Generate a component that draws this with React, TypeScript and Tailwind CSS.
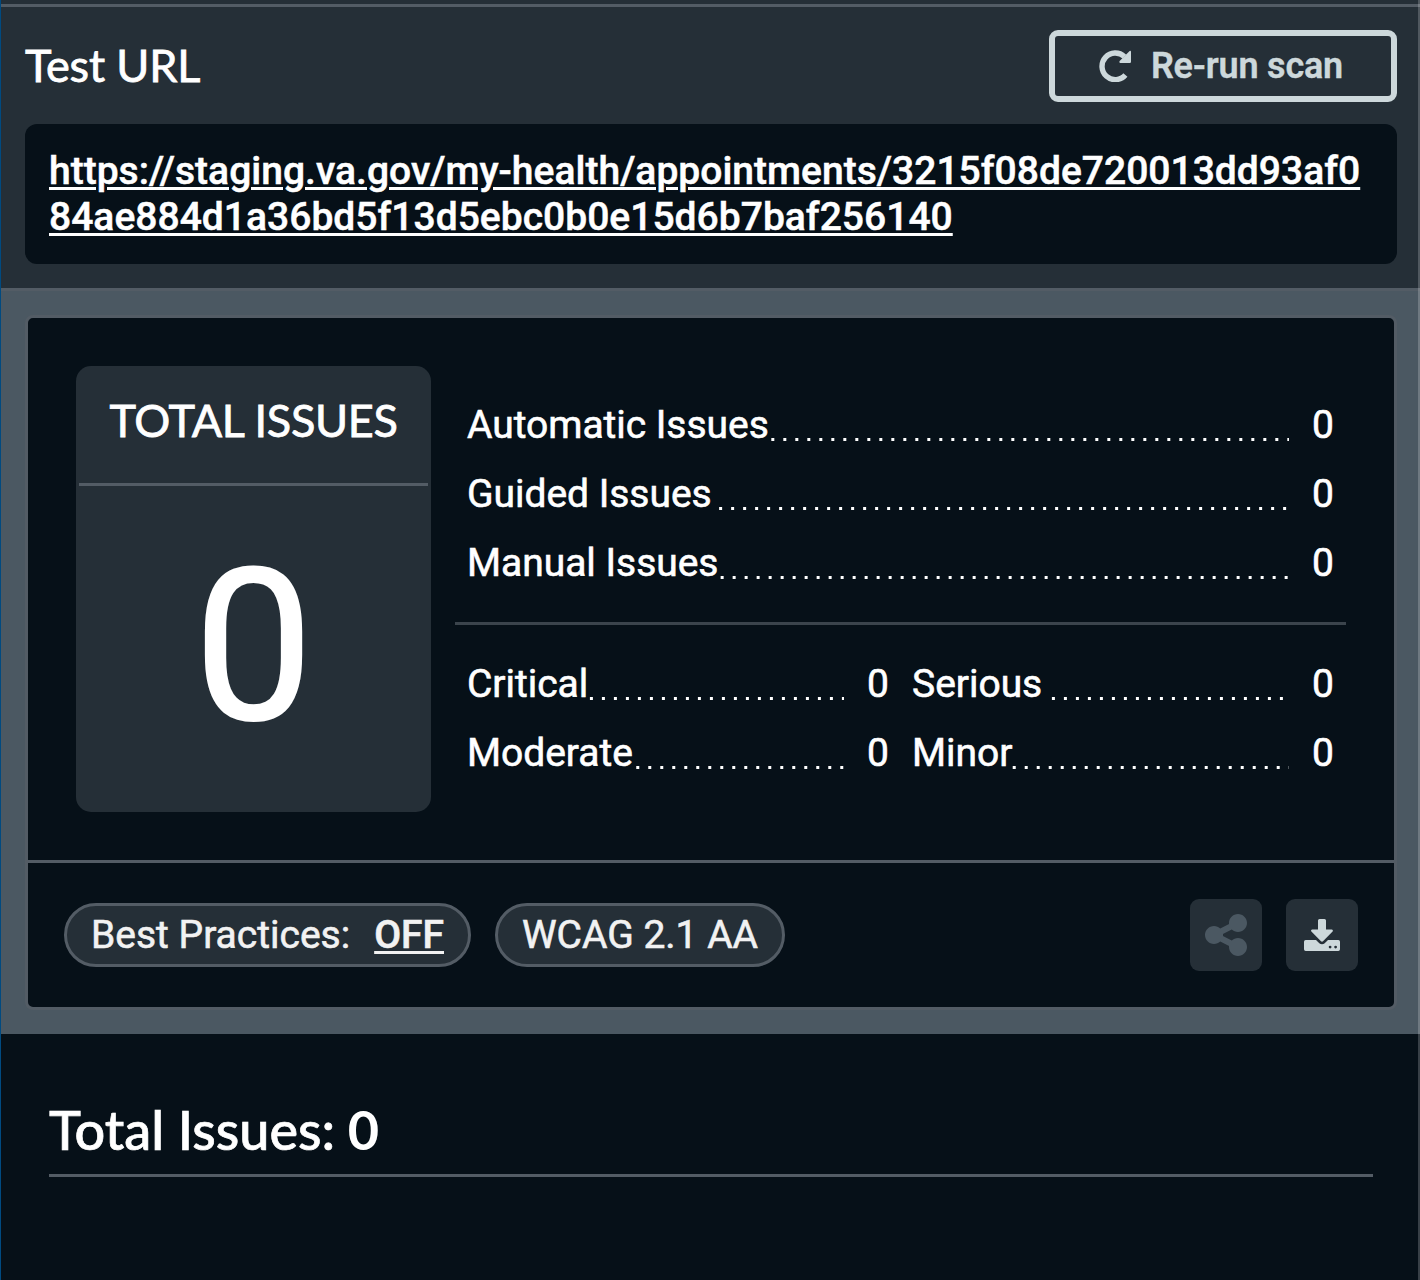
import { FaShareNodes } from "react-icons/fa6";

const glyph = "[-webkit-text-stroke:0.6px_currentColor]";

function Row({ label, dots }: { label: string; dots: string }) {
  return (
    <div className={"flex h-[69px] items-start text-[39px] leading-[71px] tracking-[-0.03px] " + glyph}>
      <span className="whitespace-nowrap">{label}</span>
      <span
        className={
          "mr-[23px] mt-[48px] h-[3px] min-w-0 flex-1 bg-[linear-gradient(to_right,white_3px,transparent_3px)] bg-[length:12px_3px] bg-repeat-x " +
          dots
        }
      />
      <span>0</span>
    </div>
  );
}

function RedoIcon() {
  return (
    <svg viewBox="0 0 32 32" className="size-8 shrink-0" fill="none">
      <path d="M26.400 25 A13.300 13.300 0 1 1 25.400 6.600" stroke="currentColor" strokeWidth="5.400" />
      <path d="M30.600 1.100 Q32 .3 32 2 V11.800 Q32 13 30.800 13 H21.200 Q19.600 12.400 20.600 11 Z" fill="currentColor" />
    </svg>
  );
}

function DownloadIcon() {
  return (
    <svg viewBox="0 0 36 32" className="h-8 w-9" fill="currentColor">
      <path d="M15.500 0h5A1.500 1.500 0 0 1 22 1.500V10.500h5.700c1.100 0 1.600 1.300.9 2.100L19 22.200c-.6.6-1.400.6-2 0L7.400 12.600c-.8-.8-.2-2.100.9-2.100H14V1.500A1.500 1.500 0 0 1 15.500 0Z" />
      <path fillRule="evenodd" d="M1.700 21H12l3.300 3.200c1.500 1.500 3.900 1.500 5.400 0L24 21h10.300A1.700 1.700 0 0 1 36 22.700v7.600a1.700 1.700 0 0 1-1.700 1.700H1.700A1.700 1.700 0 0 1 0 30.300v-7.600A1.700 1.700 0 0 1 1.700 21ZM26.100 26.700a1.400 1.400 0 1 0 0 2.800 1.400 1.400 0 0 0 0-2.800Zm5.500 0a1.400 1.400 0 1 0 0 2.800 1.400 1.400 0 0 0 0-2.800Z" />
    </svg>
  );
}

export default function App() {
  return (
    <div className="relative h-[1280px] w-[1420px] overflow-hidden border-l border-[#004a80] bg-[#061018] font-[Roboto,sans-serif] text-white">
      <header className="h-[291px] border-b-[3px] border-[#535c65] bg-[#252f37]">
        <div className="h-[7px] border-b-[3px] border-[#535c65]" />
        <div className="flex items-start justify-between pl-6 pr-[23px] pt-[23px]">
          <h2 className="font-[Lato,sans-serif] text-[45px] leading-[70px] tracking-[-0.15px] [-webkit-text-stroke:0.8px_currentColor]">
            Test URL
          </h2>
          <button className="flex h-[72px] w-[348px] items-center justify-center gap-5 rounded-[9px] border-[6px] border-[#cdd8db] pr-1 text-[36px] font-semibold tracking-[-0.2px] text-[#cdd8db] [-webkit-text-stroke:0.4px_currentColor]">
            <RedoIcon />
            <span>Re-run scan</span>
          </button>
        </div>
        <div className="ml-6 mr-[23px] mt-[22px] h-[140px] rounded-[12px] bg-[#061018] p-6">
          <a className="block break-all text-[39px] font-medium leading-[46px] tracking-[0.015px] underline decoration-[3px] underline-offset-[3px] [-webkit-text-stroke:0.5px_currentColor]">
            https://staging.va.gov/my-health/appointments/3215f08de720013dd93af084ae884d1a36bd5f13d5ebc0b0e15d6b7baf256140
          </a>
        </div>
      </header>

      <section className="h-[743px] bg-[#4b5862] pl-6 pr-[23px] pt-6">
        <div className="h-[695px] rounded-[8px] border-[3px] border-[#535c65] bg-[#061018]">
          <div className="flex h-[542px] gap-6 p-12">
            <div className="h-[446px] w-[355px] shrink-0 rounded-[15px] bg-[#252f37] px-[3px]">
              <h3 className="h-[120px] border-b-[3px] border-[#535c65] text-center font-[Lato,sans-serif] text-[45px] leading-[108px] tracking-[-0.3px] [-webkit-text-stroke:0.8px_currentColor]">
                TOTAL ISSUES
              </h3>
              <p className="mt-[33px] text-center text-[212px] leading-[256px] [-webkit-text-stroke:2px_currentColor]">0</p>
            </div>
            <div className="w-[891px] pt-6">
              <div className="px-3">
                <Row label="Automatic Issues" dots="ml-px bg-[position:right_2px_top]" />
                <Row label="Guided Issues" dots="ml-px bg-[position:right_6.3px_top]" />
                <Row label="Manual Issues" dots="ml-px bg-[position:right_4px_top]" />
              </div>
              <hr className="mb-6 mt-[25px] border-t-[3px] border-[#3b444c]" />
              <div className="grid grid-cols-2 gap-x-[23px] px-3">
                <Row label="Critical" dots="ml-px bg-[position:right_2px_top]" />
                <Row label="Serious" dots="ml-px bg-[position:right_9px_top]" />
                <Row label="Moderate" dots="ml-px bg-[position:right_4px_top]" />
                <Row label="Minor" dots="bg-[position:right_12px_top]" />
              </div>
            </div>
          </div>
          <div className="flex h-[147px] items-center border-t-[3px] border-[#535c65] px-9">
            <div className={"flex h-16 w-[407px] items-center justify-between rounded-full border-[3px] border-[#535c65] bg-[#252f37] px-6 text-[39px] text-[#f2f2f2] " + glyph}>
              <span className="whitespace-nowrap">Best Practices:</span>
              <span className="font-medium underline decoration-[3px] underline-offset-[3px]">OFF</span>
            </div>
            <div className={"ml-6 flex h-16 w-[290px] items-center justify-center whitespace-nowrap rounded-full border-[3px] border-[#535c65] bg-[#252f37] text-[39px] text-[#f2f2f2] " + glyph}>
              WCAG 2.1 AA
            </div>
            <button className="ml-auto flex size-[72px] items-center justify-center rounded-[9px] bg-[#252f37] text-[#4b5862]">
              <FaShareNodes size={48} />
            </button>
            <button className="ml-6 flex size-[72px] items-center justify-center rounded-[9px] bg-[#252f37] text-[#cdd8db]">
              <DownloadIcon />
            </button>
          </div>
        </div>
      </section>

      <section className="ml-12 mr-[47px] h-[143px] border-b-[3px] border-[#535c65] pt-[60px]">
        <h1 className="font-[Lato,sans-serif] text-[54px] font-medium leading-[72px] [-webkit-text-stroke:0.7px_currentColor]">
          Total Issues: <span className="-ml-px font-bold [-webkit-text-stroke:0px]">0</span>
        </h1>
      </section>
      <div className="absolute inset-y-0 right-0 w-[2px] bg-white/20" />
    </div>
  );
}
